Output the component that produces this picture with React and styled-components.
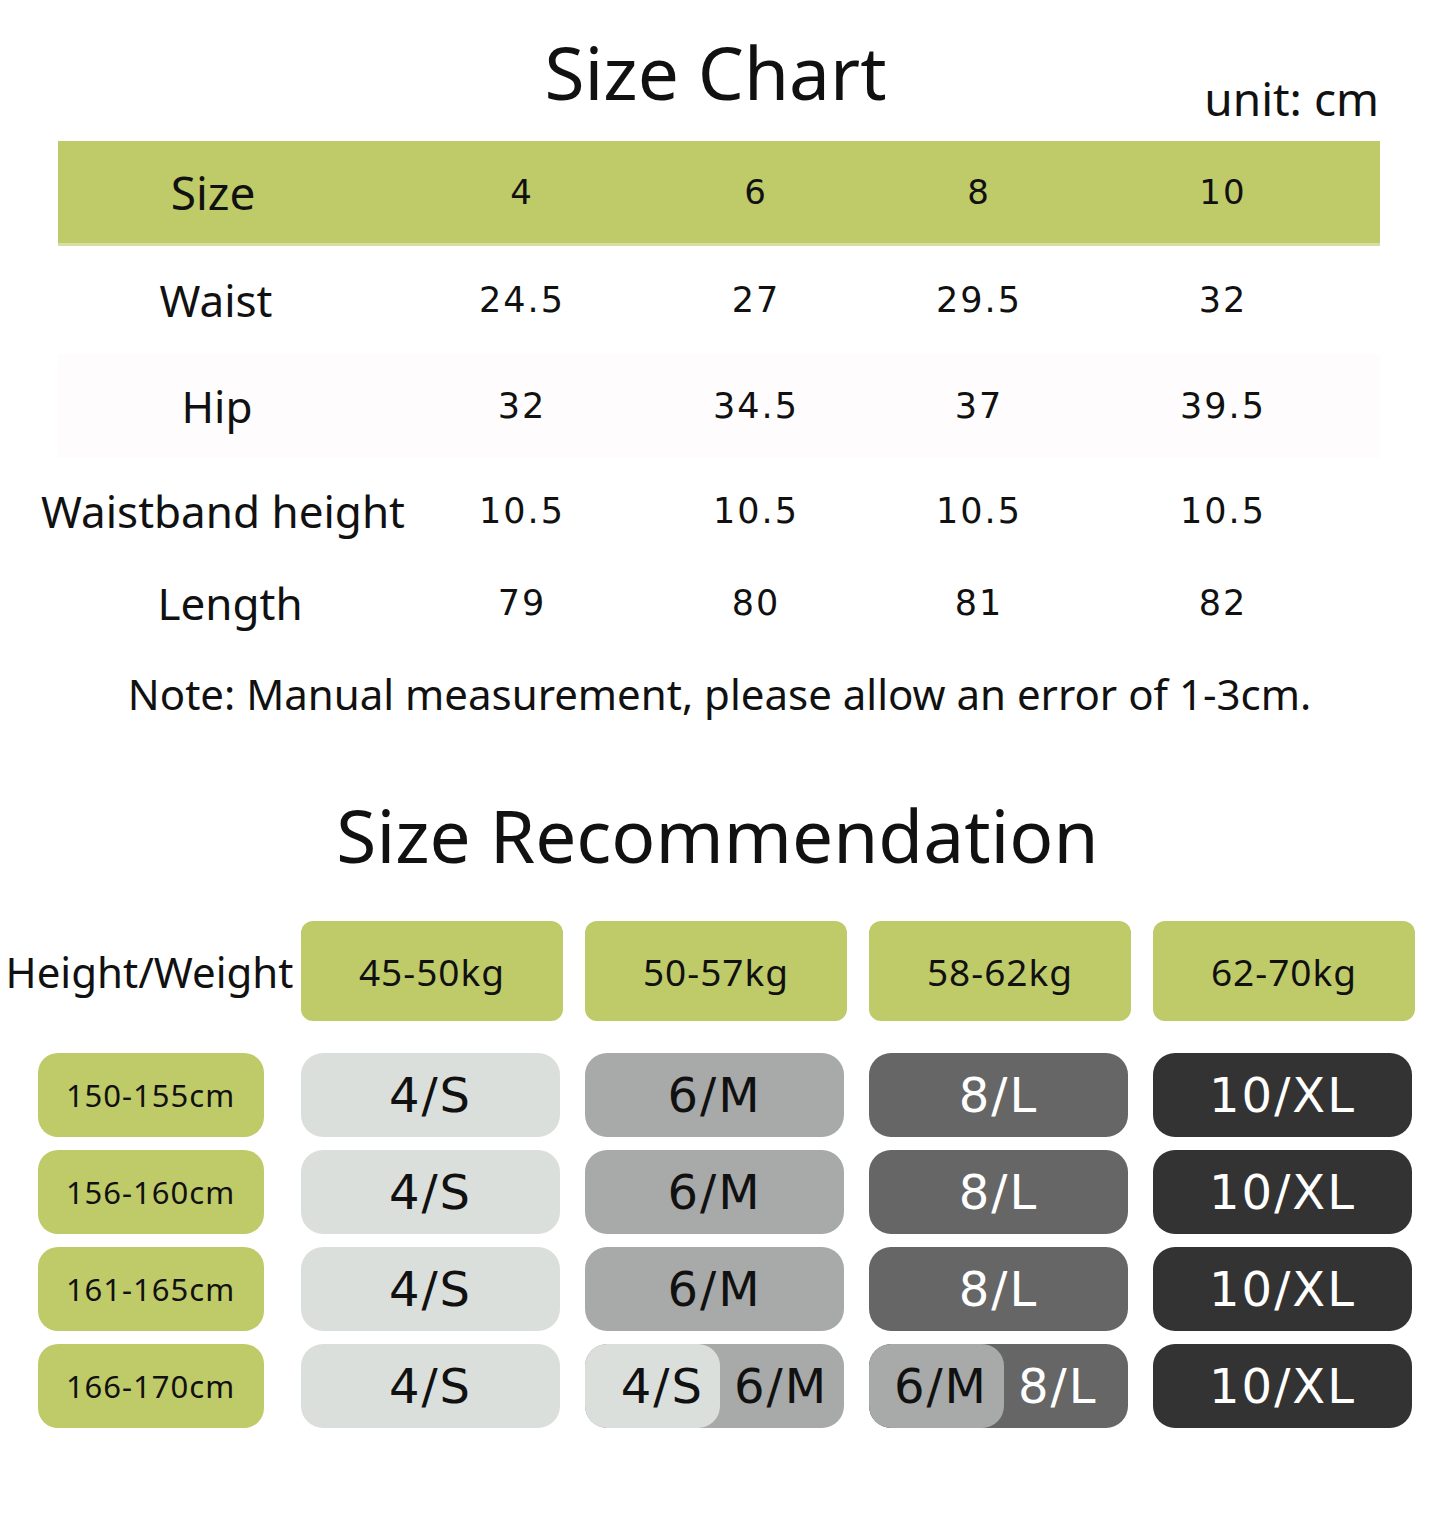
import React from 'react';
import styled, { createGlobalStyle } from 'styled-components';

const GlobalStyle = createGlobalStyle`
  body {
    margin: 0;
    background: #ffffff;
    font-family: "Noto Sans", "Open Sans", sans-serif;
    color: #111111;
  }
`;

const Page = styled.div`
  width: 1445px;
  height: 1525px;
  overflow: hidden;
  background: #ffffff;
`;

const TitleRow = styled.div`
  position: relative;
  height: 141px;
  display: flex;
  justify-content: center;
  padding-right: 14px;
  box-sizing: border-box;
`;

const Title = styled.h1`
  margin: 0;
  padding-top: 22px;
  font-size: 73px;
  font-weight: 400;
  line-height: 100px;
`;

const Unit = styled.span`
  position: absolute;
  right: 66px;
  top: 66px;
  font-size: 46px;
  line-height: 64px;
`;

const Table = styled.div`
  margin-left: 58px;
  width: 1322px;
`;

const Row = styled.div`
  display: grid;
  grid-template-columns: 330px 268px 200px 246px 242px 36px;
  align-items: center;
  height: ${p => p.h}px;
  background: ${p => p.bg || 'transparent'};
  border-bottom: ${p => (p.head ? '3px solid #d7dea3' : 'none')};
  box-sizing: border-box;
`;

const Label = styled.div`
  display: flex;
  justify-content: center;
  font-size: ${p => (p.head ? 46 : 44)}px;
  white-space: nowrap;
  transform: translateX(${p => p.shift || 0}px);
`;

const Value = styled.div`
  text-align: center;
  font-family: "DejaVu Sans", sans-serif;
  font-size: ${p => (p.head ? 34 : 35)}px;
  letter-spacing: 2px;
`;

const Note = styled.p`
  margin: 22px 0 0;
  text-align: center;
  padding-right: 6px;
  font-size: 42px;
  line-height: 60px;
`;

const SubTitle = styled.h2`
  margin: 66px 0 0;
  text-align: center;
  padding-right: 10px;
  font-size: 73px;
  font-weight: 400;
  line-height: 90px;
`;

const RecGrid = styled.div`
  display: grid;
  grid-template-columns: 279px repeat(4, 262px);
  column-gap: 22px;
  margin-top: ${p => p.top}px;
  row-gap: 13px;
  grid-auto-rows: ${p => p.rowH}px;
`;

const CornerLabel = styled.div`
  display: flex;
  align-items: center;
  justify-content: center;
  font-size: 42px;
  white-space: nowrap;
  transform: translateX(10px);
`;

const WeightCell = styled.div`
  display: flex;
  align-items: center;
  justify-content: center;
  background: #bfca69;
  border-radius: 12px;
  font-size: 37px;
  letter-spacing: 1px;
`;

const HeightCell = styled.div`
  justify-self: center;
  width: 226px;
  display: flex;
  align-items: center;
  justify-content: center;
  background: #bfca69;
  border-radius: 20px;
  font-size: 31px;
  letter-spacing: 1px;
  transform: translateX(11px);
`;

const tones = {
  S: { bg: '#dbdfdb', fg: '#111111' },
  M: { bg: '#a8a9a9', fg: '#111111' },
  L: { bg: '#656665', fg: '#ffffff' },
  XL: { bg: '#333333', fg: '#ffffff' },
};

const SizeCell = styled.div`
  width: 259px;
  display: flex;
  align-items: center;
  justify-content: center;
  background: ${p => tones[p.tone].bg};
  color: ${p => tones[p.tone].fg};
  border-radius: 22px;
  font-family: "DejaVu Sans", sans-serif;
  font-size: 48px;
  letter-spacing: 2px;
  overflow: hidden;
`;

const SplitCell = styled(SizeCell)`
  justify-content: flex-start;
  align-items: stretch;
`;

const SplitPart = styled.div`
  display: flex;
  align-items: center;
  justify-content: flex-end;
  width: 135px;
  padding-right: 16px;
  box-sizing: border-box;
  border-radius: 22px;
  background: ${p => tones[p.tone].bg};
  color: ${p => tones[p.tone].fg};
`;

const SplitRest = styled.div`
  display: flex;
  align-items: center;
  padding-left: 14px;
`;

const sizes = ['4', '6', '8', '10'];
const chart = [
  { label: 'Waist', values: ['24.5', '27', '29.5', '32'], h: 108, shift: -7 },
  { label: 'Hip', values: ['32', '34.5', '37', '39.5'], h: 104, shift: -6, bg: '#fefcfc' },
  { label: 'Waistband height', values: ['10.5', '10.5', '10.5', '10.5'], h: 106, shift: 0 },
  { label: 'Length', values: ['79', '80', '81', '82'], h: 78, shift: 7 },
];

const weights = ['45-50kg', '50-57kg', '58-62kg', '62-70kg'];
const heights = ['150-155cm', '156-160cm', '161-165cm', '166-170cm'];

const SizeBox = ({ cell }) => {
  if (Array.isArray(cell)) {
    const [a, b] = cell;
    return (
      <SplitCell tone={b}>
        <SplitPart tone={a}>{a === 'S' ? '4/S' : '6/M'}</SplitPart>
        <SplitRest>{b === 'M' ? '6/M' : '8/L'}</SplitRest>
      </SplitCell>
    );
  }
  const text = { S: '4/S', M: '6/M', L: '8/L', XL: '10/XL' }[cell];
  return <SizeCell tone={cell}>{text}</SizeCell>;
};

const recRows = [
  ['S', 'M', 'L', 'XL'],
  ['S', 'M', 'L', 'XL'],
  ['S', 'M', 'L', 'XL'],
  ['S', ['S', 'M'], ['M', 'L'], 'XL'],
];

const App = () => {
  return (
    <Page>
      <GlobalStyle />
      <TitleRow>
        <Title>Size Chart</Title>
        <Unit>unit: cm</Unit>
      </TitleRow>
      <Table>
        <Row h={105} bg="#bfca69" head>
          <Label head shift={-10}>Size</Label>
          {sizes.map(s => (
            <Value key={s} head>{s}</Value>
          ))}
        </Row>
        {chart.map(row => (
          <Row key={row.label} h={row.h} bg={row.bg}>
            <Label shift={row.shift}>{row.label}</Label>
            {row.values.map((v, i) => (
              <Value key={i}>{v}</Value>
            ))}
          </Row>
        ))}
      </Table>
      <Note>Note: Manual measurement, please allow an error of 1-3cm.</Note>
      <SubTitle>Size Recommendation</SubTitle>
      <RecGrid top={41} rowH={100}>
        <CornerLabel>Height/Weight</CornerLabel>
        {weights.map(w => (
          <WeightCell key={w}>{w}</WeightCell>
        ))}
      </RecGrid>
      <RecGrid top={32} rowH={84}>
        {recRows.map((row, r) => (
          <React.Fragment key={r}>
            <HeightCell>{heights[r]}</HeightCell>
            {row.map((cell, c) => (
              <SizeBox key={c} cell={cell} />
            ))}
          </React.Fragment>
        ))}
      </RecGrid>
    </Page>
  );
};

export default App;
